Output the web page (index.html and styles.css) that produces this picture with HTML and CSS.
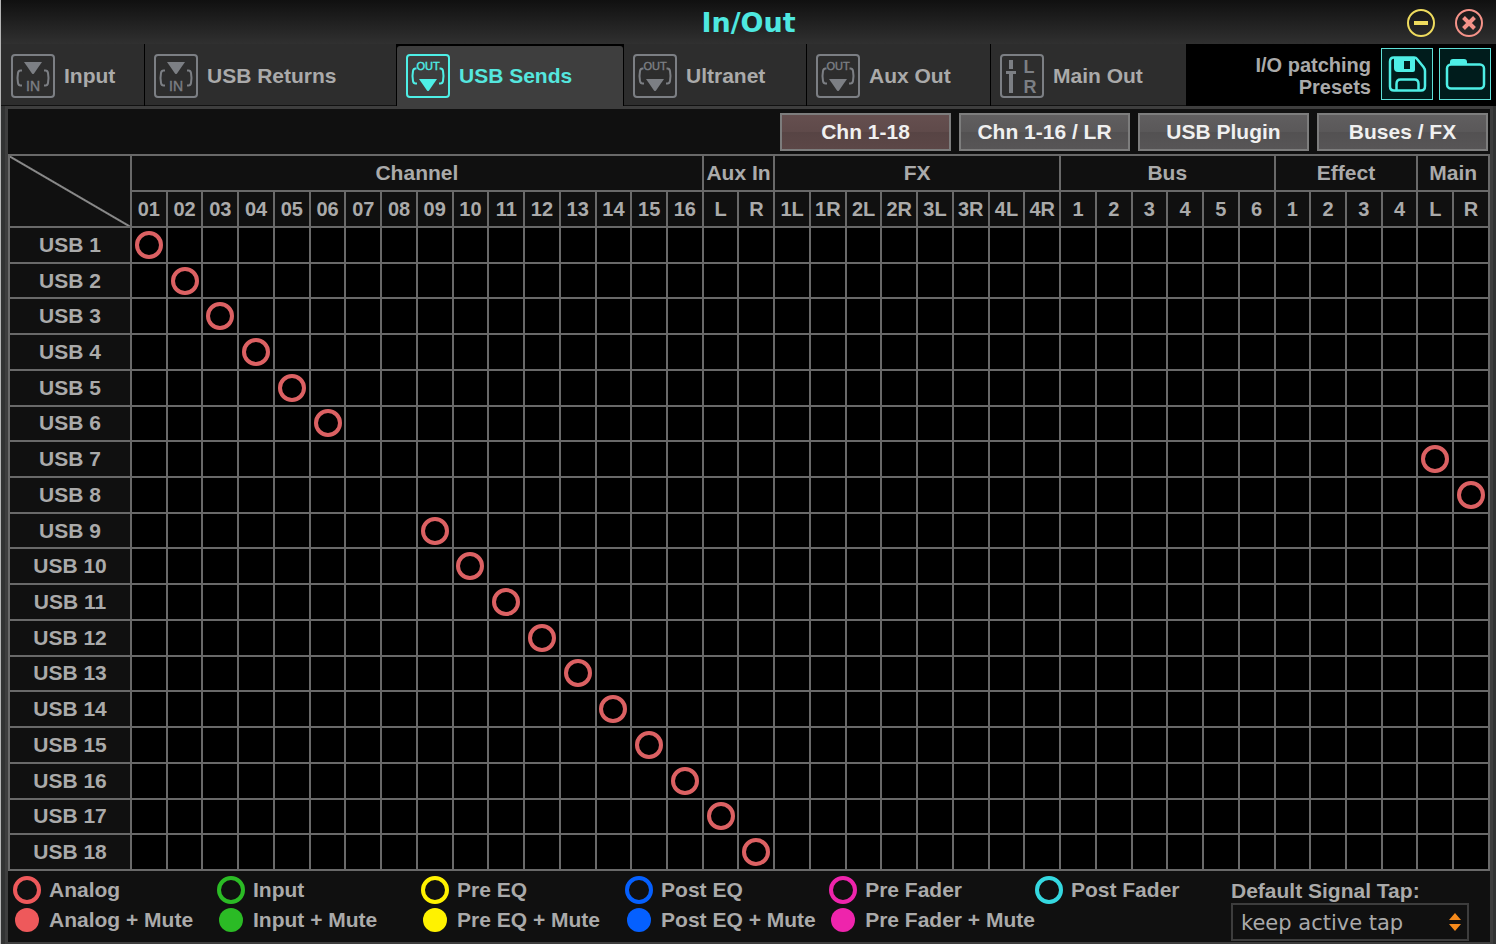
FILE: index.html
```html
<!DOCTYPE html>
<html lang="en">
<head>
<meta charset="utf-8">
<title>In/Out</title>
<link rel="stylesheet" href="styles.css">
</head>
<body>
<svg class="sprite" aria-hidden="true">
  <symbol id="icon-in" viewBox="0 0 46 46">
    <rect x="2" y="2" width="42" height="42" rx="3" fill="none" stroke="currentColor" stroke-width="2"/>
    <path d="M14 9h18l-8 11.500q-1 1-2 0z" fill="currentColor"/>
    <path d="M12 17.500h-1.500q-2 0-2.500 2.500-1 5 0 10 .5 2.500 2.500 2.500h1.500M34 17.500h1.500q2 0 2.500 2.500 1 5 0 10-.5 2.500-2.500 2.500h-1.500" fill="none" stroke="currentColor" stroke-width="2"/>
  </symbol>
  <symbol id="icon-out" viewBox="0 0 46 46">
    <rect x="2" y="2" width="42" height="42" rx="3" fill="none" stroke="currentColor" stroke-width="2"/>
    <path d="M14 26h18l-8 11.500q-1 1-2 0z" fill="currentColor"/>
    <path d="M11.500 15.500h-1q-2 0-2.500 2.500-1 5 0 10 .5 2.500 2.500 2.500h1.500M34.500 15.500h1q2 0 2.500 2.500 1 5 0 10-.5 2.500-2.500 2.500h-1.500" fill="none" stroke="currentColor" stroke-width="2"/>
  </symbol>
  <symbol id="icon-main" viewBox="0 0 46 46">
    <rect x="2" y="2" width="42" height="42" rx="3" fill="none" stroke="currentColor" stroke-width="2"/>
    <path d="M10 7h4v9h-4zM7 18h10v3h-3v19h-4V21H7z" fill="currentColor"/>
  </symbol>
</svg>
<div class="window">
  <header class="titlebar">
    <h1 class="title">In/Out</h1>
    <div class="window-controls">
      <button class="window-button minimize" type="button" aria-label="Minimize">
        <svg viewBox="0 0 30 30"><circle cx="15" cy="15" r="13" fill="none" stroke="currentColor" stroke-width="2"/><path d="M8 15h14" stroke="currentColor" stroke-width="4"/></svg>
      </button>
      <button class="window-button close" type="button" aria-label="Close">
        <svg viewBox="0 0 30 30"><circle cx="15" cy="15" r="13" fill="none" stroke="currentColor" stroke-width="2"/><path d="M9.500 9.500l11 11M20.500 9.500l-11 11" stroke="currentColor" stroke-width="4"/></svg>
      </button>
    </div>
  </header>
  <div class="toolbar">
    <nav class="tabs" aria-label="Routing pages">
      <button class="tab" type="button"><svg class="tab-icon"><use href="#icon-in"/><text x="23" y="38" class="icon-text icon-text-in">IN</text></svg>Input</button>
      <button class="tab" type="button"><svg class="tab-icon"><use href="#icon-in"/><text x="23" y="38" class="icon-text icon-text-in">IN</text></svg>USB Returns</button>
      <button class="tab tab-active" type="button" aria-current="page"><svg class="tab-icon"><use href="#icon-out"/><text x="23" y="17" class="icon-text icon-text-out">OUT</text></svg>USB Sends</button>
      <button class="tab" type="button"><svg class="tab-icon"><use href="#icon-out"/><text x="23" y="17" class="icon-text icon-text-out">OUT</text></svg>Ultranet</button>
      <button class="tab" type="button"><svg class="tab-icon"><use href="#icon-out"/><text x="23" y="17" class="icon-text icon-text-out">OUT</text></svg>Aux Out</button>
      <button class="tab" type="button"><svg class="tab-icon"><use href="#icon-main"/><text x="30" y="20" class="icon-text icon-text-main">L</text><text x="31" y="40" class="icon-text icon-text-main">R</text></svg>Main Out</button>
    </nav>
    <div class="presets">
      <div class="presets-label">I/O patching<br>Presets</div>
      <button class="preset-button" type="button" aria-label="Save preset">
        <svg viewBox="0 0 50 50"><path d="M12 8.500h20q2 0 3 1.500l6.500 8q1.500 2 1.500 4v15q0 4.500-4 4.500H12q-4 0-4-4v-25q0-4 4-4z" fill="none" stroke="currentColor" stroke-width="2.500"/><path fill="currentColor" fill-rule="evenodd" d="M12 8h21v13q0 2-2 2H16q-4 0-4-4zM22 12v8h6v-8z"/><path d="M14.500 41.500V35q0-4.500 4-4.500h14q4 0 4 4.500v6.500" fill="none" stroke="currentColor" stroke-width="2.500"/></svg>
      </button>
      <button class="preset-button" type="button" aria-label="Load preset">
        <svg viewBox="0 0 50 50"><rect x="7" y="15.500" width="37" height="24" rx="4" fill="none" stroke="currentColor" stroke-width="2.500"/><path d="M10 16v-3q0-3 3-3h11q3 0 3 3v3z" fill="currentColor"/></svg>
      </button>
    </div>
  </div>
  <main class="panel">
    <div class="sources">
      <button class="source source-active" type="button">Chn 1-18</button>
      <button class="source" type="button">Chn 1-16 / LR</button>
      <button class="source" type="button">USB Plugin</button>
      <button class="source" type="button">Buses / FX</button>
    </div>
    <div class="matrix-area">
      <table class="matrix">
        <colgroup><col class="name-column"><col span="38"></colgroup>
        <thead>
          <tr>
            <td class="corner" rowspan="2"></td>
            <th colspan="16" scope="colgroup">Channel</th>
            <th colspan="2" scope="colgroup">Aux In</th>
            <th colspan="8" scope="colgroup">FX</th>
            <th colspan="6" scope="colgroup">Bus</th>
            <th colspan="4" scope="colgroup">Effect</th>
            <th colspan="2" scope="colgroup">Main</th>
          </tr>
          <tr class="column-names" id="column-names"></tr>
        </thead>
        <tbody id="matrix-body"></tbody>
      </table>
    </div>
    <footer class="footer">
      <ul class="legend">
        <li class="legend-item analog"><span class="ring"></span>Analog</li>
        <li class="legend-item input"><span class="ring"></span>Input</li>
        <li class="legend-item pre-eq"><span class="ring"></span>Pre EQ</li>
        <li class="legend-item post-eq"><span class="ring"></span>Post EQ</li>
        <li class="legend-item pre-fader"><span class="ring"></span>Pre Fader</li>
        <li class="legend-item post-fader"><span class="ring"></span>Post Fader</li>
        <li class="legend-item analog"><span class="dot"></span>Analog + Mute</li>
        <li class="legend-item input"><span class="dot"></span>Input + Mute</li>
        <li class="legend-item pre-eq"><span class="dot"></span>Pre EQ + Mute</li>
        <li class="legend-item post-eq"><span class="dot"></span>Post EQ + Mute</li>
        <li class="legend-item pre-fader"><span class="dot"></span>Pre Fader + Mute</li>
      </ul>
      <div class="signal-tap">
        <label for="tap">Default Signal Tap:</label>
        <div class="select-box">
          <select id="tap"><option>keep active tap</option></select>
          <svg class="select-arrows" viewBox="0 0 12 20" aria-hidden="true"><path d="M6 1l6 7H0zM0 12h12l-6 7z" fill="currentColor"/></svg>
        </div>
      </div>
    </footer>
  </main>
</div>
<script src="matrix.js"></script>
</body>
</html>
```
FILE: styles.css
```css
* { box-sizing: border-box; }
body {
  margin: 0;
  background: #323333;
  color: #aaa;
  font: bold 21px/24px "Liberation Sans", Arial, sans-serif;
}
button {
  margin: 0;
  padding: 0;
  border: 0;
  background: none;
  color: inherit;
  font: inherit;
}
.sprite { position: absolute; width: 0; height: 0; }
.window {
  display: flex;
  flex-direction: column;
  min-height: 100vh;
  border-left: 1px solid #b5b5b5;
}
.titlebar {
  display: grid;
  grid-template-columns: 1fr auto 1fr;
  align-items: center;
  height: 44px;
  padding: 2px 12px 0;
  background: linear-gradient(#101010, #303030);
}
.title {
  grid-column: 2;
  margin: 0;
  color: #4ee8e0;
  font: bold 27px/30px "DejaVu Sans", Verdana, sans-serif;
}
.window-controls { display: flex; gap: 18px; justify-self: end; }
.window-button { width: 30px; height: 30px; }
.window-button svg { display: block; }
.minimize { color: #eedb5e; }
.close { color: #f59389; }
.toolbar { display: flex; height: 62px; background: #000; }
.tabs {
  flex: 1185;
  display: grid;
  grid-template-columns: 143fr 251fr 226fr 182fr 183fr 195fr;
  gap: 1px;
}
.tab {
  display: flex;
  align-items: center;
  gap: 8px;
  padding: 2px 0 0 8px;
  border-bottom: 1px solid #111;
  background: #2d2d2d;
  white-space: nowrap;
}
.tab:first-child { padding-left: 9px; }
.tab-icon { width: 46px; height: 46px; color: #7c7f84; }
.tab-active {
  margin-top: 2px;
  padding-top: 0;
  border: 0;
  border-radius: 3px 3px 0 0;
  background: #3e3e3e;
  color: #55e6de;
}
.tab-active .tab-icon { color: #4eefe6; }
.icon-text {
  fill: currentColor;
  font-family: "Liberation Sans", Arial, sans-serif;
  text-anchor: middle;
}
.icon-text-in { font-size: 14px; font-weight: normal; stroke: currentColor; stroke-width: .4px; }
.icon-text-out { font-size: 11px; font-weight: normal; stroke: currentColor; stroke-width: .4px; }
.icon-text-main { font-size: 18px; }
.presets {
  flex: 305;
  display: flex;
  align-items: center;
  justify-content: flex-end;
  gap: 6px;
  padding: 0 5px 2px 0;
}
.presets-label {
  margin-right: 4px;
  padding-top: 4px;
  text-align: right;
  font-size: 20px;
  line-height: 22px;
}
.preset-button {
  width: 52px;
  height: 52px;
  border: 1px solid #5fe0d8;
  background: #001c1c;
  color: #4eefe6;
}
.preset-button svg { display: block; }
.panel {
  flex: 1;
  display: flex;
  flex-direction: column;
  margin: 0 3px 0 4px;
  border: 3px solid #3e3e3e;
  border-bottom-width: 2px;
  background: #101010;
}
.sources {
  display: flex;
  justify-content: flex-end;
  gap: 8px;
  padding: 4px 2px 3px 0;
}
.source {
  width: 171px;
  height: 38px;
  border: 2px solid #7d7d7d;
  background: linear-gradient(#605e5f, #5a5859 50%, #535152 51%, #575556);
  color: #f0f0f0;
}
.source-active { background: linear-gradient(#654f4f, #5f4a4a 50%, #574444 51%, #5c4747); }
.matrix-area { display: grid; flex: 1; }
.matrix {
  width: 100%;
  height: 100%;
  border-collapse: collapse;
  table-layout: fixed;
  text-align: center;
}
.matrix thead tr { height: 36px; }
.matrix th, .matrix td {
  padding: 0;
  border: 2px solid #696969;
  line-height: 24px;
}
.name-column { width: 122px; }
.matrix tbody td { background: #000; }
.column-names th { font-size: 20px; }
.matrix .corner {
  background: linear-gradient(to top right, transparent calc(50% - 2px), #888 calc(50% - 1px), #888 50%, transparent calc(50% + 1px));
}
.ring {
  display: block;
  width: 28px;
  height: 28px;
  border: 4px solid #dc6163;
  border-radius: 50%;
}
.matrix .ring { margin: 0 auto; }
.footer {
  display: flex;
  padding: 4px 21px 1px 5px;
}
.legend {
  flex: 1;
  display: grid;
  grid-template-columns: repeat(5, 204fr) 196fr;
  grid-auto-rows: 30px;
  margin: 0;
  padding: 0;
  list-style: none;
}
.legend-item { display: flex; align-items: center; gap: 8px; white-space: nowrap; }
.legend .ring, .legend .dot { flex: none; border-color: var(--mark); }
.dot {
  width: 24px;
  height: 24px;
  margin: 0 2px;
  border-radius: 50%;
  background: var(--mark);
}
.analog { --mark: #ee595b; }
.input { --mark: #2bbb25; }
.pre-eq { --mark: #fff200; }
.post-eq { --mark: #0560ff; }
.pre-fader { --mark: #ee24ac; }
.post-fader { --mark: #35d8e0; }
.signal-tap { width: 238px; padding-top: 4px; }
.signal-tap label { display: block; }
.select-box { position: relative; }
.select-box select {
  display: block;
  width: 100%;
  height: 38px;
  padding: 2px 8px 0;
  border: 2px solid #3d3d3d;
  border-radius: 0;
  background: #101010;
  color: #aaa;
  font: 21px/28px "DejaVu Sans", Verdana, sans-serif;
  appearance: none;
}
.select-arrows {
  position: absolute;
  top: 9px;
  right: 8px;
  width: 12px;
  height: 20px;
  color: #f58a1c;
  pointer-events: none;
}
```
FILE: matrix.js
```js
const columns = [
  '01', '02', '03', '04', '05', '06', '07', '08', '09', '10', '11', '12', '13', '14', '15', '16',
  'L', 'R', '1L', '1R', '2L', '2R', '3L', '3R', '4L', '4R',
  '1', '2', '3', '4', '5', '6', '1', '2', '3', '4', 'L', 'R'
];
// Column index feeding each USB send; 7 and 8 carry the main mix.
const routes = [0, 1, 2, 3, 4, 5, 36, 37, 8, 9, 10, 11, 12, 13, 14, 15, 16, 17];

const names = document.getElementById('column-names');
columns.forEach((label) => {
  const th = document.createElement('th');
  th.scope = 'col';
  th.textContent = label;
  names.append(th);
});

const body = document.getElementById('matrix-body');
routes.forEach((source, index) => {
  const row = body.insertRow();
  const th = document.createElement('th');
  th.scope = 'row';
  th.textContent = `USB ${index + 1}`;
  row.append(th);
  columns.forEach((label, column) => {
    const cell = row.insertCell();
    if (column === source) {
      const button = document.createElement('button');
      button.type = 'button';
      button.className = 'ring';
      button.setAttribute('aria-label', `USB ${index + 1} from ${label}, Analog`);
      cell.append(button);
    }
  });
});
```
